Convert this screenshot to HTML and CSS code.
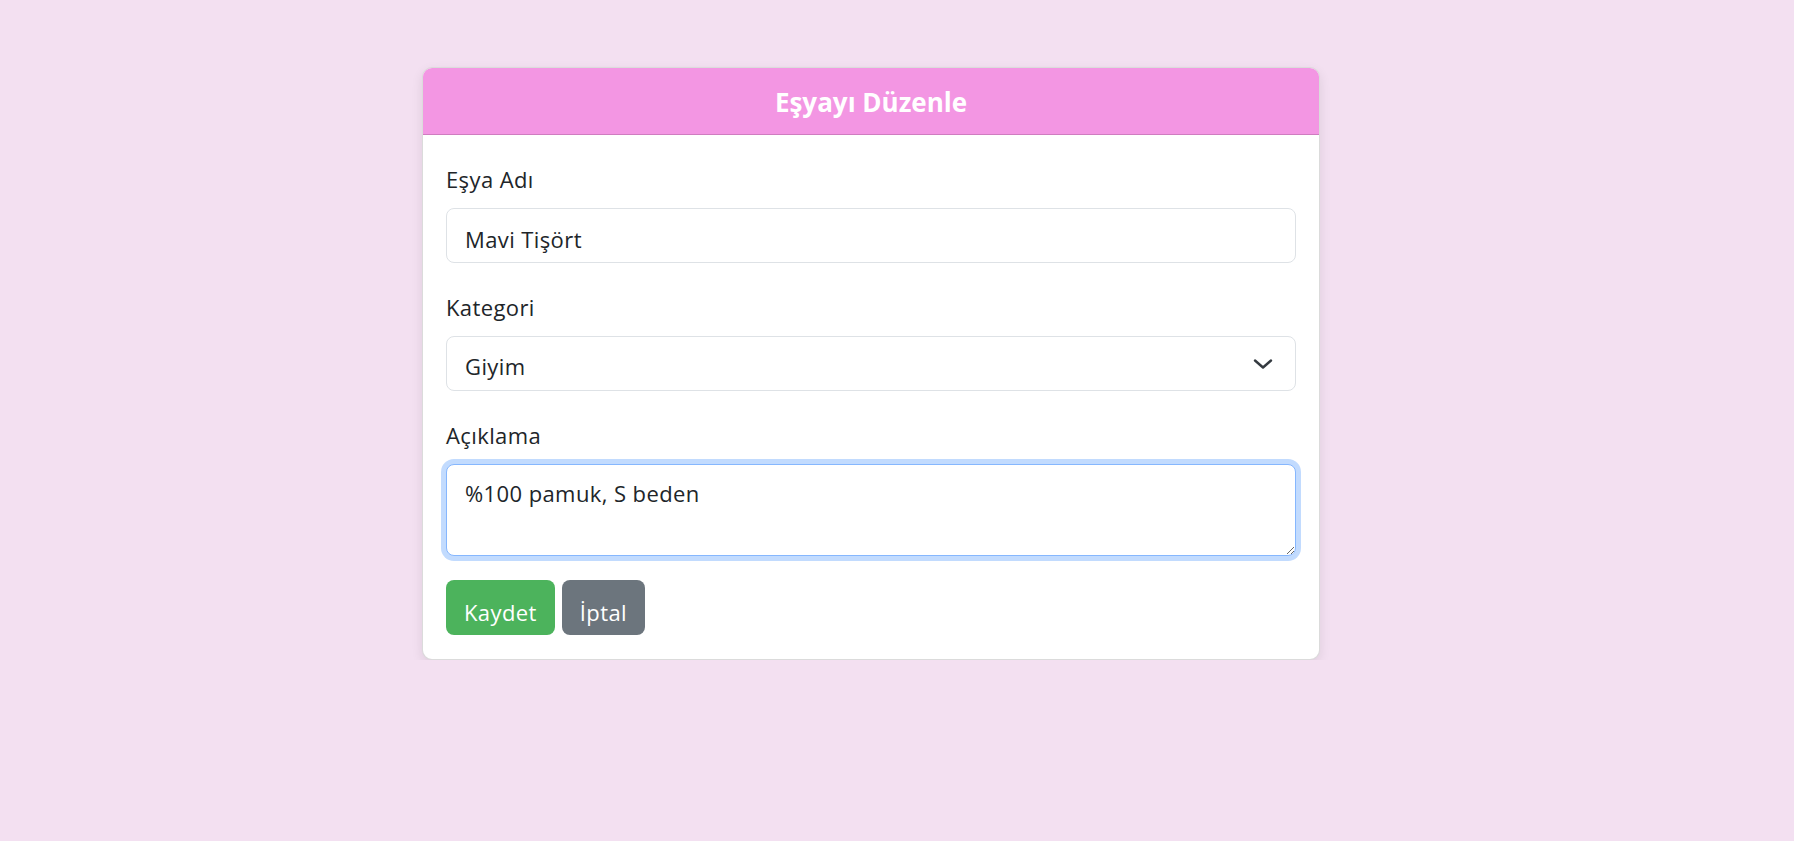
FILE: index.html
```html
<!DOCTYPE html>
<html lang="tr">
<head>
<meta charset="utf-8">
<title>Eşyayı Düzenle</title>
<link rel="stylesheet" href="styles.css">
</head>
<body>
<div class="page">
  <div class="card">
    <div class="card-header">Eşyayı Düzenle</div>
    <div class="card-body">
      <div class="group">
        <label class="label">Eşya Adı</label>
        <input class="control" type="text" value="Mavi Tişört">
      </div>
      <div class="group">
        <label class="label">Kategori</label>
        <div class="control select">
          <span>Giyim</span>
          <svg class="chevron" width="20" height="12" viewBox="0 0 20 12"><path d="M2 2.5 L10 9.5 L18 2.5" fill="none" stroke="#343a40" stroke-width="2.4" stroke-linecap="round" stroke-linejoin="round"/></svg>
        </div>
      </div>
      <div class="group group-area">
        <label class="label">Açıklama</label>
        <textarea class="control area" rows="2">%100 pamuk, S beden</textarea>
      </div>
      <div class="buttons">
        <button class="btn btn-save">Kaydet</button>
        <button class="btn btn-cancel">İptal</button>
      </div>
    </div>
  </div>
</div>
</body>
</html>
```
FILE: styles.css
```css
html, body {
  margin: 0;
  padding: 0;
}
body {
  background: #f3e0f1;
  font-family: "Open Sans", "Noto Sans", sans-serif;
  color: #212529;
}
.page {
  padding: 67px 0 0 422px;
}
.card {
  width: 898px;
  box-sizing: border-box;
  background: #fff;
  border: 1px solid rgba(0, 0, 0, 0.14);
  border-radius: 10px;
  overflow: hidden;
  box-shadow: 0 4px 12px rgba(0, 0, 0, 0.09);
}
.card-header {
  height: 67px;
  box-sizing: border-box;
  padding-top: 2px;
  background: #f396e3;
  border-bottom: 1px solid #cf7cc0;
  color: #fff;
  font-weight: 700;
  font-size: 26px;
  display: flex;
  align-items: center;
  justify-content: center;
}
.card-body {
  padding: 28px 23px 24px;
}
.group {
  margin-bottom: 28px;
}
.group-area {
  margin-bottom: 24px;
}
.label {
  display: block;
  font-size: 22px;
  line-height: 33px;
  margin-bottom: 12px;
  letter-spacing: 0.4px;
}
.control {
  display: block;
  width: 100%;
  box-sizing: border-box;
  height: 55px;
  margin: 0;
  padding: 6px 16px 0 18px;
  border: 1px solid #dee2e6;
  border-radius: 8px;
  background: #fff;
  font-family: "Open Sans", "Noto Sans", sans-serif;
  font-size: 22px;
  line-height: 47px;
  letter-spacing: 0.4px;
  color: #212529;
  outline: none;
}
.select {
  display: flex;
  align-items: center;
  justify-content: space-between;
  padding-right: 22px;
}
.select span {
  line-height: 47px;
}
.chevron {
  display: block;
  margin-top: -5px;
}
.area {
  height: 92px;
  padding: 12px 16px 12px 18px;
  line-height: 33px;
  border-color: #86b7fe;
  box-shadow: 0 0 0 5px #c2dbfe;
  resize: vertical;
}
.buttons {
  display: flex;
  gap: 7px;
}
.btn {
  height: 55px;
  box-sizing: border-box;
  padding: 9px 17px 0;
  border: 1px solid transparent;
  border-radius: 8px;
  font-family: "Open Sans", "Noto Sans", sans-serif;
  font-size: 22px;
  line-height: 33px;
  letter-spacing: 0.4px;
  color: #fff;
  align-self: flex-start;
}
.btn-save {
  background: #4cb35c;
}
.btn-cancel {
  background: #6c757d;
}
```
